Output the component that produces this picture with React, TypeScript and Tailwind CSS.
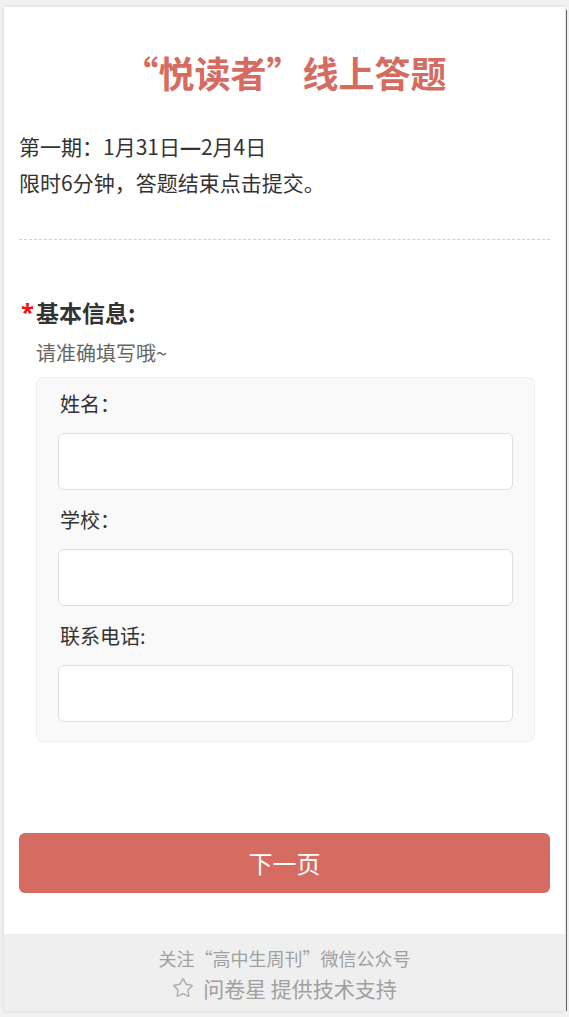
import { Star } from "lucide-react";

const fields = ["姓名：", "学校：", "联系电话:"];

export default function App() {
  return (
    <div
      lang="zh-CN"
      className="min-h-[1017px] bg-[#f1f1f1] pt-[7px] pl-[4px] pb-[9px]"
      style={{ fontFamily: '"Noto Sans CJK SC", "Noto Sans", sans-serif' }}
    >
      <div className="flex">
        <div className="w-[561px] bg-white shadow-[0_0_4px_rgba(0,0,0,0.12)]">
          <div className="px-[15px] pt-[41px]">
            <h1 className="text-center text-[36px] leading-[48px] font-bold text-[#d56b61]">
              “悦读者”线上答题
            </h1>
            <div className="mt-[32px] text-[21px] leading-[36px] text-[#333]">
              <p className="h-[36px]">
                第一期：1月31日<span className="font-['Noto_Sans'] leading-none font-semibold">—</span>2月4日
              </p>
              <p>限时6分钟，答题结束点击提交。</p>
            </div>
            <div className="mt-[39px] border-t border-dashed border-[#d0d0d0]" />

            <div className="mt-[56px] flex items-center">
              <span className="w-[17px] pl-[2px] font-['Noto_Sans'] text-[24px] leading-[32px] font-bold text-[#f01414]">*</span>
              <span className="text-[23px] leading-[32px] font-bold text-[#333]">基本信息:</span>
            </div>
            <p className="mt-[10px] pl-[17px] text-[20px] leading-[30px] text-[#666]">请准确填写哦~</p>

            <div className="mt-[9px] ml-[17px] mr-[15px] rounded-[7px] border border-[#efefef] bg-[#f9f9f9] px-[21px] pt-[11px] pb-[19px]">
              {fields.map((f, i) => (
                <div key={f} className={i > 0 ? "mt-[15px]" : ""}>
                  <p className="pl-[2px] text-[20px] leading-[30px] text-[#333]">{f}</p>
                  <input
                    type="text"
                    className="mt-[14px] block h-[57px] w-full rounded-[6px] border border-[#dedede] bg-white outline-none"
                  />
                </div>
              ))}
            </div>

            <button className="mt-[91px] block h-[60px] w-full rounded-[6px] bg-[#d56b61] text-[24px] text-white">
              下一页
            </button>
          </div>

          <div className="mt-[41px] bg-[#efefef] pt-[12px] pb-[9px] text-center text-[#a0a0a0]">
            <p className="text-[18px] leading-[24px]">关注“高中生周刊”微信公众号</p>
            <p className="mt-[4px] flex items-center justify-center gap-[9px] text-[21px] leading-[28px]">
              <Star size={22} strokeWidth={1.5} className="text-[#aaa]" />
              <span>问卷星 提供技术支持</span>
            </p>
          </div>
        </div>
        <div className="mt-[3px] ml-[1px] w-px bg-[#666]" />
      </div>
    </div>
  );
}
